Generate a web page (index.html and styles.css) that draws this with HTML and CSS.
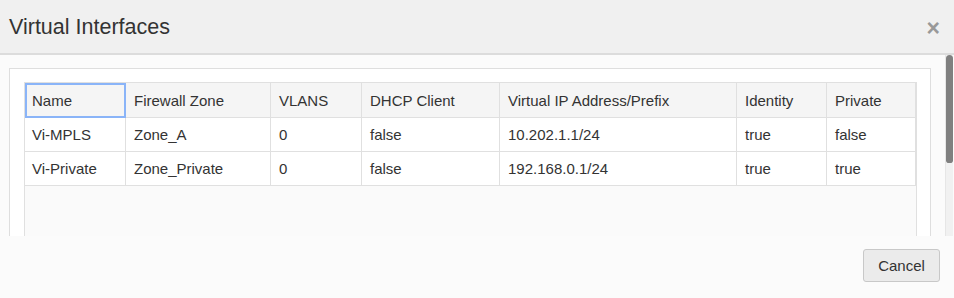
FILE: index.html
```html
<!DOCTYPE html>
<html lang="en">
<head>
  <meta charset="UTF-8">
  <title>Virtual Interfaces</title>
  <link rel="stylesheet" href="styles.css">
</head>
<body>
  <div class="modal">
    <div class="modal-header">
      <h2 class="modal-title">Virtual Interfaces</h2>
      <span class="close">&times;</span>
    </div>

    <div class="modal-body">
      <div class="scroll-content">
        <div class="panel">
          <div class="grid">
            <table>
              <colgroup>
                <col style="width: 101px">
                <col style="width: 145px">
                <col style="width: 91px">
                <col style="width: 138px">
                <col style="width: 237px">
                <col style="width: 90px">
                <col style="width: 89px">
              </colgroup>
              <thead>
                <tr>
                  <th class="focused">Name</th>
                  <th>Firewall Zone</th>
                  <th>VLANS</th>
                  <th>DHCP Client</th>
                  <th>Virtual IP Address/Prefix</th>
                  <th>Identity</th>
                  <th>Private</th>
                </tr>
              </thead>
              <tbody>
                <tr>
                  <td>Vi-MPLS</td>
                  <td>Zone_A</td>
                  <td>0</td>
                  <td>false</td>
                  <td>10.202.1.1/24</td>
                  <td>true</td>
                  <td>false</td>
                </tr>
                <tr>
                  <td>Vi-Private</td>
                  <td>Zone_Private</td>
                  <td>0</td>
                  <td>false</td>
                  <td>192.168.0.1/24</td>
                  <td>true</td>
                  <td>true</td>
                </tr>
              </tbody>
            </table>
          </div>
        </div>
      </div>
      <div class="scrollbar"><div class="thumb"></div></div>
    </div>

    <div class="modal-footer">
      <button class="btn">Cancel</button>
    </div>
  </div>
</body>
</html>
```

FILE: styles.css
```css
body {
  margin: 0;
  font-family: 'Liberation Sans', Arial, sans-serif;
  color: #333;
  background: #fbfbfb;
}

.modal {
  width: 954px;
  height: 298px;
  display: flex;
  flex-direction: column;
  overflow: hidden;
}

.modal-header {
  height: 53px;
  background: #f0f0f0;
  border-bottom: 2px solid #dcdcdc;
  display: flex;
  align-items: center;
  justify-content: space-between;
  padding: 0 14px 0 9px;
  flex-shrink: 0;
}

.modal-title {
  margin: 0;
  font-size: 21.5px;
  font-weight: normal;
  color: #333;
  padding-top: 1px;
}

.close {
  font-size: 23px;
  font-weight: bold;
  color: #999;
  line-height: 1;
  margin-top: 3px;
}

.modal-body {
  height: 181px;
  display: flex;
  overflow: hidden;
  flex-shrink: 0;
}

.scroll-content {
  flex: 1;
  padding: 13px 14px 0 9px;
}

.panel {
  background: #fff;
  border: 1px solid #dedede;
  padding: 13px 13px 0 14px;
}

.grid {
  height: 260px;
  background: #fafafa;
  border-left: 1px solid #e0e0e0;
  border-right: 1px solid #e0e0e0;
}

table {
  width: 891px;
  margin-left: -1px;
  border-collapse: collapse;
  table-layout: fixed;
  font-size: 15px;
}

th, td {
  border: 1px solid #e0e0e0;
  text-align: left;
  font-weight: normal;
  padding: 0 6px 0 8px;
  white-space: nowrap;
  color: #333;
}

th:first-child, td:first-child {
  padding-left: 7px;
}

th {
  height: 34px;
  background: #f5f5f5;
}

td {
  height: 33px;
  background: #fff;
}

th.focused {
  outline: 2px solid #8ab4f8;
  outline-offset: -2px;
}

.scrollbar {
  width: 10px;
  margin-right: 1px;
  background: #f1f1f1;
  border-left: 1px solid #e6e6e6;
}

.thumb {
  height: 108px;
  background: #808080;
  border-radius: 5px 5px 4px 4px;
}

.modal-footer {
  flex: 1;
  display: flex;
  justify-content: flex-end;
  align-items: flex-start;
  padding: 13px 14px 0 0;
}

.btn {
  font-family: 'Liberation Sans', Arial, sans-serif;
  font-size: 15px;
  color: #333;
  background: #ebebeb;
  border: 1px solid #c8c8c8;
  border-radius: 3px;
  width: 77px;
  height: 33px;
  padding: 0;
}
```
